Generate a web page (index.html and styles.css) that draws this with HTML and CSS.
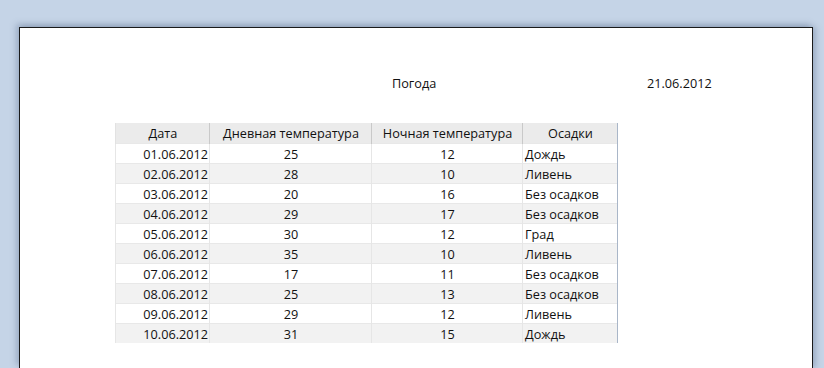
FILE: index.html
```html
<!DOCTYPE html>
<html lang="ru">
<head>
<meta charset="utf-8">
<link rel="stylesheet" href="styles.css">
</head>
<body>
<div class="sheet">
  <div class="title-row">
    <div class="title">Погода</div>
    <div class="date">21.06.2012</div>
  </div>
  <table class="grid">
    <thead>
      <tr><th class="c1">Дата</th><th class="c2">Дневная температура</th><th class="c3">Ночная температура</th><th class="c4">Осадки</th></tr>
    </thead>
    <tbody>
      <tr><td class="c1">01.06.2012</td><td class="c2">25</td><td class="c3">12</td><td class="c4">Дождь</td></tr>
      <tr><td class="c1">02.06.2012</td><td class="c2">28</td><td class="c3">10</td><td class="c4">Ливень</td></tr>
      <tr><td class="c1">03.06.2012</td><td class="c2">20</td><td class="c3">16</td><td class="c4">Без осадков</td></tr>
      <tr><td class="c1">04.06.2012</td><td class="c2">29</td><td class="c3">17</td><td class="c4">Без осадков</td></tr>
      <tr><td class="c1">05.06.2012</td><td class="c2">30</td><td class="c3">12</td><td class="c4">Град</td></tr>
      <tr><td class="c1">06.06.2012</td><td class="c2">35</td><td class="c3">10</td><td class="c4">Ливень</td></tr>
      <tr><td class="c1">07.06.2012</td><td class="c2">17</td><td class="c3">11</td><td class="c4">Без осадков</td></tr>
      <tr><td class="c1">08.06.2012</td><td class="c2">25</td><td class="c3">13</td><td class="c4">Без осадков</td></tr>
      <tr><td class="c1">09.06.2012</td><td class="c2">29</td><td class="c3">12</td><td class="c4">Ливень</td></tr>
      <tr><td class="c1">10.06.2012</td><td class="c2">31</td><td class="c3">15</td><td class="c4">Дождь</td></tr>
    </tbody>
  </table>
</div>
</body>
</html>
```

FILE: styles.css
```css
html, body {
  margin: 0;
  padding: 0;
  height: 100%;
  overflow: hidden;
}
body {
  background: #c5d4e7;
  font-family: "Open Sans", "Liberation Sans", sans-serif;
  font-size: 12.7px;
  color: #111;
  padding: 27px 11px 0 19px;
  box-sizing: border-box;
}
.sheet {
  background: #fff;
  border-left: 1.5px solid #1a1a1a;
  border-top: 1.5px solid #1a1a1a;
  border-right: 1.5px solid #1a1a1a;
  height: 100%;
  overflow: hidden;
  box-shadow: -3px -3px 6px rgba(90, 110, 140, 0.35), 3px 0 6px rgba(90, 110, 140, 0.35);
  padding: 45px 0 0 95px;
  box-sizing: border-box;
}
.title-row {
  display: flex;
  height: 20px;
  align-items: center;
  margin-bottom: 30px;
}
.title {
  margin-left: 277px;
  width: 255px;
}
.grid {
  border-collapse: collapse;
  table-layout: fixed;
  width: 502px;
}
.grid th, .grid td {
  height: 20px;
  padding: 1px 1px 0 2px;
  font-weight: normal;
  line-height: 18px;
  white-space: nowrap;
  box-sizing: border-box;
}
.grid th {
  background: #ebebeb;
  text-align: center;
  border-left: 1px solid #c9c9c9;
}
.grid th.c1 { border-left: 1px solid #e2e2e2; }
.grid th.c4 { border-right: 1px solid #a9b6c8; }
.grid td {
  border-left: 1px solid #e6e6e6;
  border-top: 1px solid #e8e8e8;
}
.grid td.c4 { border-right: 1px solid #a9b6c8; }
.grid tbody tr:nth-child(even) td { background: #f2f2f2; }
.c1 { width: 94px; text-align: right; }
.c2 { width: 162px; text-align: center; }
.c3 { width: 151px; text-align: center; }
.c4 { width: 95px; text-align: left; }
.grid td.c1 { text-align: right; }
.grid td.c4 { text-align: left; }
```
